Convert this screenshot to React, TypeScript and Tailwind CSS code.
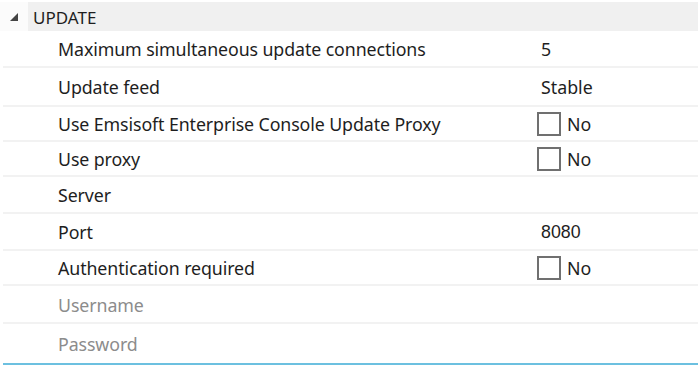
import React from 'react';

type Row = {
  label: string;
  value?: string;
  check?: boolean;
  muted?: boolean;
  h: string;
  arial?: boolean;
};

const rows: Row[] = [
  { label: 'Maximum simultaneous update connections', value: '5', h: 'h-[37px]' },
  { label: 'Update feed', value: 'Stable', h: 'h-[39px]' },
  { label: 'Use Emsisoft Enterprise Console Update Proxy', check: true, h: 'h-[35px]' },
  { label: 'Use proxy', check: true, h: 'h-[35px]' },
  { label: 'Server', h: 'h-[37px]' },
  { label: 'Port', value: '8080', arial: true, h: 'h-[37px]' },
  { label: 'Authentication required', check: true, h: 'h-[35px]' },
  { label: 'Username', muted: true, h: 'h-[38px]' },
  { label: 'Password', muted: true, h: 'h-[39px]' },
];

export default function App() {
  return (
    <div
      className="w-[698px] h-[366px] bg-white text-[#1e1e1e] overflow-hidden"
      style={{ fontFamily: '"Noto Sans", "Open Sans", sans-serif' }}
    >
      <div className="pt-[2px] flex h-[31px]">
        <div className="w-[28px] bg-[#fbfbfb] flex items-center justify-center">
          <svg width="8" height="8" viewBox="0 0 8 8" className="mt-[1px]">
            <polygon points="8,0 8,8 0,8" fill="#444" />
          </svg>
        </div>
        <div className="flex-1 bg-[#f0f0f0] flex items-center pl-[5px] pt-[2px] text-[17px] leading-none">UPDATE</div>
      </div>

      <div className="ml-[3px] border-b-2 border-[#6cc0e0]">
        {rows.map((r, i) => (
          <div
            key={r.label}
            className={`flex items-center ${r.h} ${i < rows.length - 1 ? 'border-b-2 border-[#f2f2f2]' : ''} text-[17.8px] leading-none`}
          >
            <div className={`w-[534px] pl-[55px] pt-[3px] tracking-[-0.1px] ${r.muted ? 'text-[#8c8c8c]' : ''}`}>{r.label}</div>
            {r.check ? (
              <div className="flex items-center gap-[6px]">
                <div className="w-[24px] h-[24px] border-2 border-[#707070] bg-white" />
                <span className="pt-[2px]">No</span>
              </div>
            ) : (
              <div
                className="pl-[4px] pt-[3px]"
                style={r.arial ? { fontFamily: '"Liberation Sans", Arial, sans-serif' } : undefined}
              >
                {r.value}
              </div>
            )}
          </div>
        ))}
      </div>
    </div>
  );
}
